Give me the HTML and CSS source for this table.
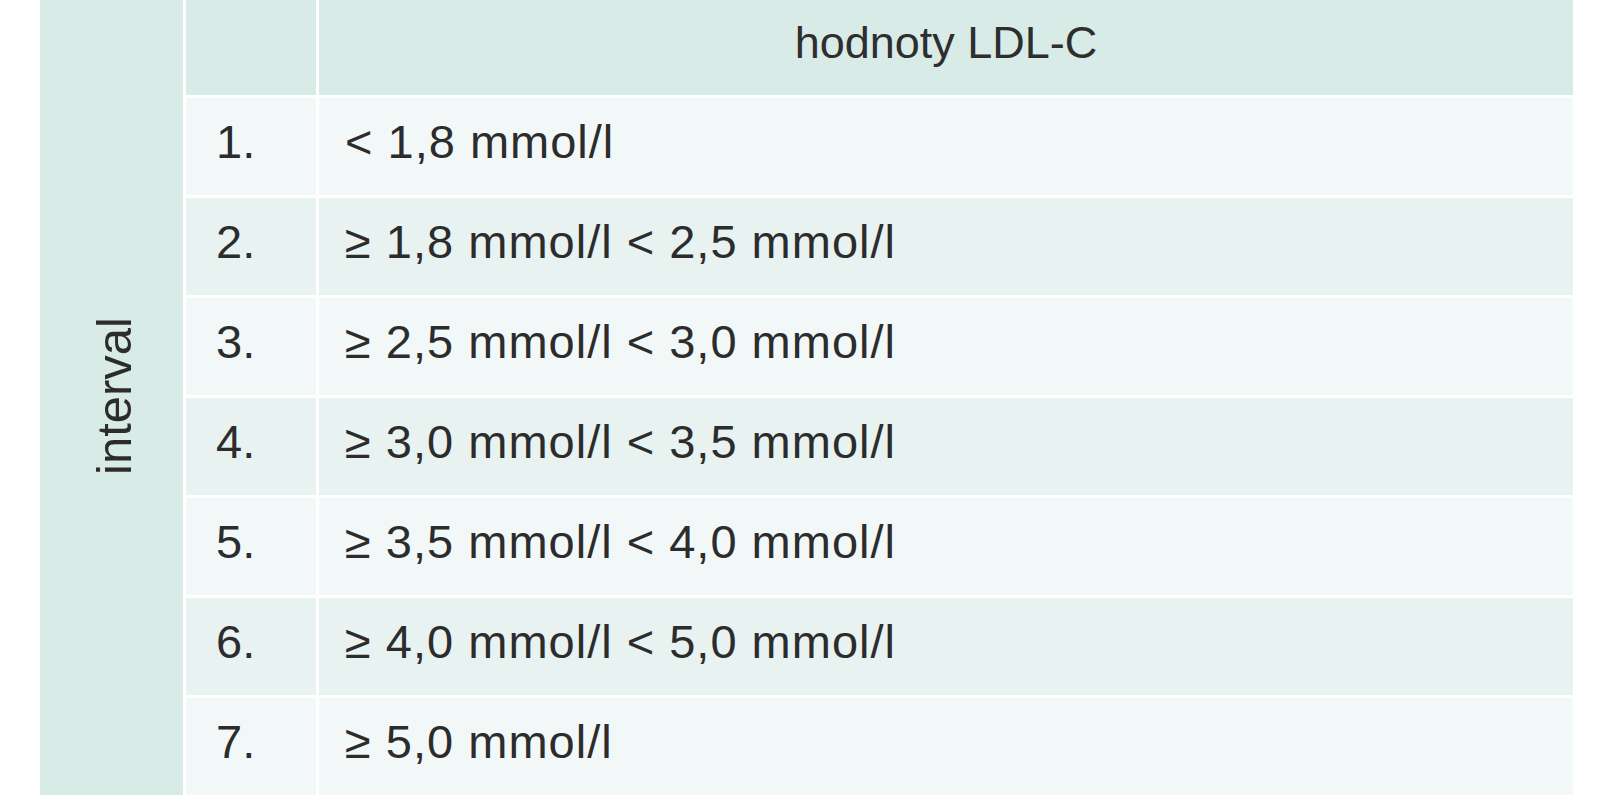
FILE: index.html
```html
<!DOCTYPE html>
<html lang="cs">
<head>
<meta charset="utf-8">
<title>hodnoty LDL-C</title>
<link rel="stylesheet" href="styles.css">
</head>
<body>
<div class="table">
  <div class="side"><span class="side-label">interval</span></div>
  <div class="cell head"></div>
  <div class="cell head head-title">hodnoty LDL-C</div>

  <div class="cell num odd">1.</div>
  <div class="cell val odd">&lt; 1,8 mmol/l</div>

  <div class="cell num even">2.</div>
  <div class="cell val even">≥ 1,8 mmol/l &lt; 2,5 mmol/l</div>

  <div class="cell num odd">3.</div>
  <div class="cell val odd">≥ 2,5 mmol/l &lt; 3,0 mmol/l</div>

  <div class="cell num even">4.</div>
  <div class="cell val even">≥ 3,0 mmol/l &lt; 3,5 mmol/l</div>

  <div class="cell num odd">5.</div>
  <div class="cell val odd">≥ 3,5 mmol/l &lt; 4,0 mmol/l</div>

  <div class="cell num even">6.</div>
  <div class="cell val even">≥ 4,0 mmol/l &lt; 5,0 mmol/l</div>

  <div class="cell num odd">7.</div>
  <div class="cell val odd">≥ 5,0 mmol/l</div>
</div>
</body>
</html>
```

FILE: styles.css
```css
html, body {
  margin: 0;
  padding: 0;
  background: #ffffff;
}

body {
  font-family: "Liberation Sans", Arial, sans-serif;
  color: #2c2c2c;
}

.table {
  display: grid;
  grid-template-columns: 143px 130px 1254px;
  grid-template-rows: 95px repeat(7, 97px);
  column-gap: 3px;
  row-gap: 3px;
  margin-left: 40px;
  width: 1533px;
}

.side {
  grid-row: 1 / -1;
  grid-column: 1;
  background: #d8ebe6;
  display: flex;
  align-items: center;
  justify-content: center;
  padding-left: 4px;
  padding-bottom: 4px;
  box-sizing: border-box;
}

.side-label {
  writing-mode: vertical-rl;
  transform: rotate(180deg);
  font-size: 49px;
  color: #2c2c2c;
}

.cell {
  display: flex;
  align-items: center;
  padding-bottom: 10px;
  box-sizing: border-box;
}

.head {
  background: #d9ebe7;
}

.head-title {
  justify-content: center;
  font-size: 45px;
  color: #2e2e2e;
}

.odd {
  background: #f2f8f7;
}

.even {
  background: #e7f2f1;
}

.num {
  padding-left: 30px;
  font-size: 47px;
}

.val {
  padding-left: 26px;
  font-size: 47px;
  letter-spacing: 1px;
}
```
